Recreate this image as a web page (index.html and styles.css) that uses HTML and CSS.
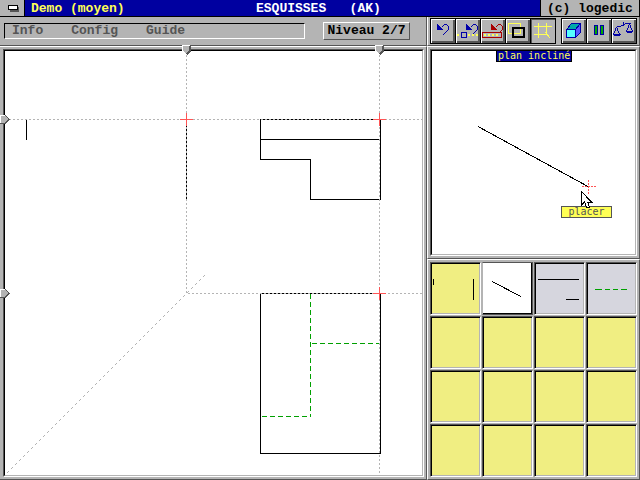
FILE: index.html
```html
<!DOCTYPE html>
<html lang="fr">
<head>
<meta charset="utf-8">
<title>ESQUISSES</title>
<link rel="stylesheet" href="styles.css">
</head>
<body>
<div class="app">
  <header class="titlebar">
    <button class="close" aria-label="Fermer">
      <svg width="11" height="7" viewBox="0 0 11 7"><path fill="#555" d="M2 2h9v5H2z"/><path d="M0 0h10v5H0z"/><path fill="#fff" d="M1 1h8v3H1z"/></svg>
    </button>
    <div class="title">
      <span class="doc">Demo (moyen)</span>
      <h1 class="name">ESQUISSES &nbsp; (AK)</h1>
    </div>
    <div class="credit">(c) logedic</div>
  </header>

  <div class="columns">
    <main class="column">
      <div class="bar bar-left">
        <nav class="menu">
          <button>Info</button>
          <button>Config</button>
          <button>Guide</button>
        </nav>
        <button class="level">Niveau 2/7</button>
      </div>
      <section class="pane pane-sketch">
        <div class="well">
          <svg class="drawing" viewBox="5 51 417 424" preserveAspectRatio="xMinYMin meet">
            <g class="ink">
              <path d="M26.500 119v21M186.500 119v80"/>
              <path d="M260.500 119.500h120v80h-70v-40h-50zM260 139.500h120"/>
              <path d="M260.500 293.500h120v160h-120z"/>
            </g>
            <g class="hidden-edge">
              <path d="M310.500 294v123"/>
              <path d="M312 343.500h68"/>
              <path d="M262 416.500h48"/>
            </g>
            <g class="guide">
              <path d="M186.500 55v238M379.500 55v420M9 119.500h413M188 293.500h234"/>
              <path pathLength="198" d="M7 473L205 275"/>
            </g>
            <g class="origin">
              <path d="M180 119.500h13M186.500 113v13"/>
              <path d="M373 119.500h13M379.500 113v13"/>
              <path d="M373 293.500h13M379.500 287v13"/>
            </g>
            <g class="markers">
              <g id="slider-top">
                <path fill="#555" d="M183 45h8v6l-4 4-4-4z"/><path fill="#b4b4b4" d="M183 46h6v4l-3 4-3-4z"/><path fill="#fff" d="M182 45h8v1h-7v5h-1z"/>
              </g>
              <use href="#slider-top" x="193"/>
              <g id="slider-left">
                <path fill="#555" d="M0 115h6l4 4.500-4 4.500H0z"/><path fill="#b4b4b4" d="M1 116h4l3 3-3 4H1z"/><path fill="#fff" d="M0 115h5v1H1v7H0z"/>
              </g>
              <use href="#slider-left" y="174"/>
            </g>
          </svg>
        </div>
      </section>
    </main>

    <aside class="column">
      <div class="bar bar-right">
        <div class="tools">
          <button aria-label="Annuler"><svg viewBox="0 0 24 24"><path class="solid" d="M6 5h1v1h1v1h1v1h1v1h1v1h1v1H6z"/><path d="M10.500 8.500l3-3h2l2 2v3l-6 6"/></svg></button>
          <button aria-label="Annuler le point"><svg viewBox="0 0 24 24"><path class="solid" d="M10 5h1v1h1v1h1v1h1v1h1v1h1v1h-6z"/><path d="M14.500 8.500l3-3h2l2 2v3l-6 6"/><path class="dots" d="M1 15h2v2H1zM12 15h2v2h-2zM16 15h2v2h-2zM20 15h2v2h-2z"/><path class="box" d="M6 13.500h4.500v5H5.500v-5z"/></svg></button>
          <button class="red" aria-label="Effacer"><svg viewBox="0 0 24 24"><path class="solid" d="M10 5h1v1h1v1h1v1h1v1h1v1h1v1h-6z"/><path d="M14.500 8.500l3-3h2l2 2v3l-3 3h-9"/><path d="M1.500 13.500h19v5h-19z"/><path class="dots" d="M3 15h2v2H3zM7 15h2v2H7zM11 15h2v2h-2zM15 15h2v2h-2z"/></svg></button>
          <button aria-label="Superposer"><svg viewBox="0 0 24 24"><path class="yellow" d="M2.500 4.500h12v10h-12z"/><path class="black" d="M7 9h11v9H7z"/></svg></button>
          <button class="pressed" aria-label="Grille"><svg viewBox="0 0 24 24"><path class="yellow" d="M3 7.500h18M3 15.500h13M7.500 4v15M15.500 4v10M14 13l5 6"/></svg></button>
        </div>
        <div class="tools">
          <button aria-label="Volume"><svg viewBox="0 0 24 24"><path class="teal" d="M4.500 10.500l5-6h9l-5 6z"/><path class="side" d="M13.500 10.500l5-6v9l-5 5z"/><path class="cyan" d="M4.500 10.500h9v8h-9z"/></svg></button>
          <button aria-label="Vues"><svg viewBox="0 0 24 24"><path class="leaf" d="M7.500 6.500h3v9h-3zM13.500 6.500h3v9h-3z"/></svg></button>
          <button aria-label="Comparer"><svg viewBox="0 0 24 24"><path d="M4.500 7.500h4l3-2 3-1h4M11.500 3v4M4.500 8l-3 7.500M4.500 8l3 7.500M1 15.500h8M2 16.500h6M17.500 5l-3 7.500M17.500 5l3 7.500M14 12.500h7M15 13.500h5"/></svg></button>
        </div>
      </div>

      <section class="pane pane-view">
        <div class="well">
          <svg class="drawing" viewBox="432 51 203 203" preserveAspectRatio="xMinYMin meet">
            <path class="ink" d="M478 126.500L588 186.500"/>
            <path class="target" d="M582 186.500h14M588.500 180v14"/>
          </svg>
          <h2 class="caption">plan incliné</h2>
          <svg class="pointer" width="12" height="17" viewBox="0 0 12 17"><path d="M.5 .5v13.500l3-3 2 5h3l-2-5h4z"/></svg>
          <div class="tip">placer</div>
        </div>
      </section>

      <section class="pane pane-palette">
        <div class="cells">
          <button class="cell" aria-label="Pièce 1"><svg viewBox="432 264 47 49"><path d="M433.500 279v6M473.500 279v21"/></svg></button>
          <button class="cell selected" aria-label="Pièce 2"><svg viewBox="484 264 47 49"><path d="M492 281.500L521 296.500"/></svg></button>
          <button class="cell lilac" aria-label="Pièce 3"><svg viewBox="536 264 47 49"><path d="M538 279.500h41M566 299.500h13"/></svg></button>
          <button class="cell lilac" aria-label="Pièce 4"><svg viewBox="588 264 47 49"><path class="green" d="M595 289.500h7M605 289.500h5M613 289.500h5M621 289.500h6"/></svg></button>
          <button class="cell" aria-label="Case 5"></button>
          <button class="cell" aria-label="Case 6"></button>
          <button class="cell" aria-label="Case 7"></button>
          <button class="cell" aria-label="Case 8"></button>
          <button class="cell" aria-label="Case 9"></button>
          <button class="cell" aria-label="Case 10"></button>
          <button class="cell" aria-label="Case 11"></button>
          <button class="cell" aria-label="Case 12"></button>
          <button class="cell" aria-label="Case 13"></button>
          <button class="cell" aria-label="Case 14"></button>
          <button class="cell" aria-label="Case 15"></button>
          <button class="cell" aria-label="Case 16"></button>
        </div>
      </section>
    </aside>
  </div>
</div>
</body>
</html>
```
FILE: styles.css
```css
:root {
  --gray: #b4b4b4;
  --dark: #555;
  --blue: #0000a0;
  --yellow: #ffff55;
}

* { box-sizing: border-box; }

body {
  margin: 0;
  background: var(--gray);
  font: bold 13px/16px "Liberation Mono", monospace;
  color: #000;
}

button {
  margin: 0;
  padding: 0;
  border: 0;
  background: none;
  font: inherit;
  color: inherit;
}

svg { display: block; shape-rendering: crispEdges; }

.app {
  display: flex;
  flex-direction: column;
  min-height: 100vh;
}

/* Title bar */
.titlebar {
  display: grid;
  grid-template-columns: 25px 1fr 100px;
  height: 17px;
  border-bottom: 1px solid #000;
  line-height: 18px;
}
.close {
  border-right: 1px solid #000;
  display: flex;
  align-items: center;
  padding-left: 8px;
}
.title {
  display: flex;
  height: 16px;
  background: var(--blue);
  padding-left: 6px;
}
.doc { color: var(--yellow); flex: 0 0 225px; }
.name {
  margin: 0;
  font: inherit;
  color: #fff;
}
.credit {
  height: 16px;
  border: 1px solid #000;
  border-width: 0 1px;
  padding-left: 6px;
}

/* Columns */
.columns {
  flex: 1;
  display: grid;
  grid-template-columns: 427fr 213fr;
}
.column {
  display: flex;
  flex-direction: column;
  min-width: 0;
}

/* Bars */
.bar {
  display: flex;
  height: 29px;
  border-right: 1px solid var(--dark);
  border-bottom: 1px solid var(--dark);
}
.bar-left {
  align-items: center;
  gap: 18px;
  padding: 0 16px 0 4px;
}
.menu {
  flex: 1;
  display: flex;
  gap: 28px;
  height: 16px;
  padding-left: 7px;
  border: 1px solid;
  border-color: #000 #fff #fff #000;
  line-height: 14px;
  color: var(--dark);
}
.level {
  width: 87px;
  height: 18px;
  border: 1px solid;
  border-color: #fff var(--dark) var(--dark) #fff;
}
.bar-right {
  justify-content: space-between;
  align-items: center;
  padding: 0 2px;
  border-left: 1px solid #fff;
}
.tools {
  display: flex;
  gap: 1px;
  padding: 1px;
  background: #000;
}
.tools button {
  width: 24px;
  height: 24px;
  background: var(--gray);
  box-shadow: inset 1px 1px #fff, inset -2px -2px var(--dark);
}
.tools .pressed { box-shadow: inset 1px 1px var(--dark); }
.tools button { color: #0000a8; }
.tools .red { color: #a80000; }
.tools path { stroke: currentColor; fill: none; }
.tools .solid { fill: currentColor; stroke: none; }
.tools .dots { fill: var(--yellow); stroke: none; }
.tools .yellow { stroke: var(--yellow); }
.tools .black { stroke: #000; stroke-width: 2; }
.tools .teal { fill: #00a8a8; }
.tools .side { fill: #5555ff; }
.tools .cyan { fill: #55ffff; }
.tools .leaf { fill: #00a800; }

/* Panes */
.pane {
  position: relative;
  display: flex;
  border: 1px solid;
  border-color: #fff var(--dark) var(--dark) #fff;
  padding: 2px;
}
.pane-sketch {
  flex: 1;
  border-left: 0;
  padding-left: 3px;
}
.pane-view { flex: 213; }
.pane-palette { flex: 221; }
.well {
  position: relative;
  flex: 1;
  display: flex;
  border: 1px solid;
  border-color: var(--dark) #fff #fff var(--dark);
  background: #fff;
}
.well::before {
  content: "";
  position: absolute;
  inset: 0;
  border: 1px solid;
  border-color: #000 var(--gray) var(--gray) #000;
}
.drawing {
  position: relative;
  flex: 1;
  margin: 1px;
  min-width: 0;
  overflow: visible;
}
.ink { stroke: #000; fill: none; }
.hidden-edge { stroke: #00a000; stroke-dasharray: 5 3; }
.guide { stroke: var(--gray); stroke-dasharray: 2 2; }
.origin { stroke: #ff5555; }
.target { stroke: #ff5555; stroke-dasharray: 2 1; }

.caption {
  position: absolute;
  top: 1px;
  left: 65px;
  margin: 0;
  padding: 0 1px;
  border: 1px solid #000;
  border-top: 0;
  background: var(--blue);
  color: var(--yellow);
  font: 10px/10px "DejaVu Sans Mono", monospace;
  white-space: nowrap;
}
.pointer {
  position: absolute;
  left: 150px;
  top: 141px;
  z-index: 1;
  fill: #fff;
  stroke: #000;
}
.tip {
  position: absolute;
  left: 130px;
  top: 156px;
  width: 51px;
  border: 1px solid var(--dark);
  background: var(--yellow);
  color: var(--dark);
  font: 10px/10px "DejaVu Sans Mono", monospace;
  text-align: center;
}

/* Palette */
.cells {
  flex: 1;
  display: grid;
  grid-template-columns: repeat(4, 1fr);
  grid-template-rows: repeat(4, 1fr);
  gap: 1px;
}
.cell {
  border: 1px solid;
  border-color: var(--dark) #fff #fff var(--dark);
  background: #f0ee82;
  box-shadow: inset 1px 1px #000, inset -1px -1px var(--gray);
  padding: 1px;
}
.cell svg { width: 100%; height: 100%; stroke: #000; }
.lilac { background: #d6d6de; }
.selected {
  background: #fff;
  border-color: var(--dark) var(--dark) var(--dark) var(--gray);
  box-shadow: inset -1px -1px #000;
}
.green { stroke: #00a000; }
```
